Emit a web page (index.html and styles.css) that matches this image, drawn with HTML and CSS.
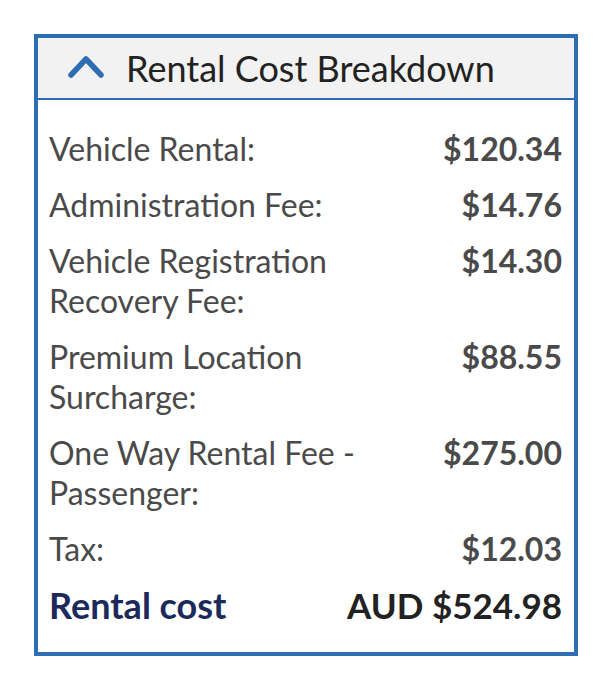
FILE: index.html
```html
<!DOCTYPE html>
<html lang="en">
<head>
<meta charset="utf-8">
<title>Rental Cost Breakdown</title>
<link rel="stylesheet" href="styles.css">
</head>
<body>
<section class="breakdown">
  <header class="breakdown-header">
    <svg class="chevron" width="36" height="24" viewBox="0 0 36 24" aria-hidden="true">
      <polyline points="3,20 18,4 33,20" fill="none" stroke="#2e6db4" stroke-width="5.5" stroke-linecap="round" stroke-linejoin="round"/>
    </svg>
    <h2 class="breakdown-title">Rental Cost Breakdown</h2>
  </header>
  <div class="breakdown-body">
    <div class="row"><span class="label">Vehicle Rental:</span><span class="value">$120.34</span></div>
    <div class="row"><span class="label">Administration Fee:</span><span class="value">$14.76</span></div>
    <div class="row"><span class="label">Vehicle Registration Recovery Fee:</span><span class="value">$14.30</span></div>
    <div class="row"><span class="label">Premium Location Surcharge:</span><span class="value">$88.55</span></div>
    <div class="row"><span class="label">One Way Rental Fee - Passenger:</span><span class="value">$275.00</span></div>
    <div class="row"><span class="label">Tax:</span><span class="value">$12.03</span></div>
    <div class="row total"><span class="label">Rental cost</span><span class="value">AUD $524.98</span></div>
  </div>
</section>
</body>
</html>
```

FILE: styles.css
```css
html, body {
  margin: 0;
  padding: 0;
  background: #ffffff;
}

body {
  font-family: Lato, "Open Sans", sans-serif;
  padding: 34px 22px 0 34px;
}

.breakdown {
  width: 544px;
  box-sizing: border-box;
  border: 4px solid #2e6db4;
  background: #ffffff;
}

.breakdown-header {
  display: flex;
  align-items: center;
  height: 60px;
  box-sizing: content-box;
  background: #f2f2f2;
  border-bottom: 2px solid #2e6db4;
  padding-left: 30px;
}

.chevron {
  display: block;
  margin-top: -2px;
}

.breakdown-title {
  margin: 0 0 0 22px;
  font-size: 36px;
  font-weight: 400;
  line-height: 44px;
  color: #222222;
}

.breakdown-body {
  display: flex;
  flex-direction: column;
  gap: 16px;
  padding: 29px 12px 27px 11px;
}

.row {
  display: flex;
  justify-content: space-between;
  align-items: baseline;
  font-size: 32px;
  line-height: 40px;
  color: #4a4a4a;
}

.label {
  max-width: 320px;
}

.value {
  font-weight: 700;
  white-space: nowrap;
}

.total .label {
  font-size: 36px;
  font-weight: 700;
  color: #1b2a5a;
}

.total .value {
  font-size: 35px;
  color: #222222;
}
```
